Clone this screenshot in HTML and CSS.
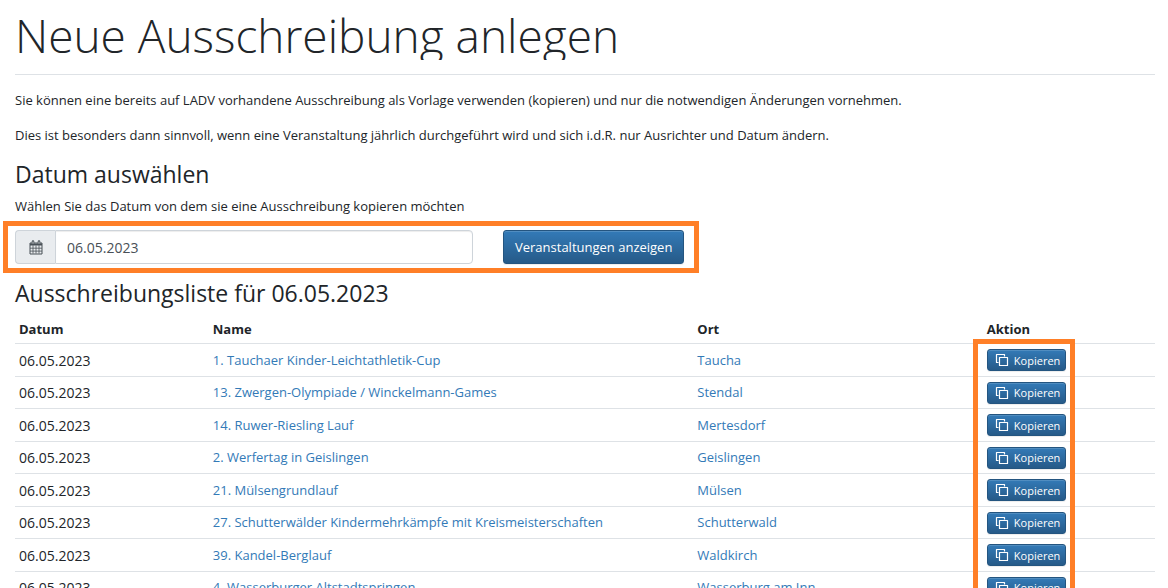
FILE: index.html
```html
<!DOCTYPE html>
<html lang="de">
<head>
<meta charset="utf-8">
<title>Neue Ausschreibung anlegen</title>
<link rel="stylesheet" href="styles.css">
</head>
<body>
<svg class="sprite" aria-hidden="true">
  <symbol id="copy" viewBox="0 0 14 14">
    <path d="M3.5 9.5H1.5V1.5H9.5V3.5M4.5 4.5H12.5V12.5H4.5Z" fill="none" stroke="currentColor" stroke-width="1.2" stroke-linejoin="round"/>
  </symbol>
</svg>
<main class="page">
  <header class="page-header">
    <h1 class="title">Neue Ausschreibung anlegen</h1>
  </header>
  <p class="text">Sie können eine bereits auf LADV vorhandene Ausschreibung als Vorlage verwenden (kopieren) und nur die notwendigen Änderungen vornehmen.</p>
  <p class="text">Dies ist besonders dann sinnvoll, wenn eine Veranstaltung jährlich durchgeführt wird und sich i.d.R. nur Ausrichter und Datum ändern.</p>
  <h2 class="heading">Datum auswählen</h2>
  <form class="date-form">
    <label class="label" for="datum">Wählen Sie das Datum von dem sie eine Ausschreibung kopieren möchten</label>
    <div class="controls">
      <div class="input-group">
        <span class="addon">
          <svg class="calendar" viewBox="0 0 14 14" aria-hidden="true">
            <path d="M1 2.5H13V13.5H1Z" fill="none" stroke="currentColor"/>
            <path d="M1 3H13V5H1Z" fill="currentColor"/>
            <path d="M4 5V13M7 5V13M10 5V13M1 7.7H13M1 10.6H13" stroke="currentColor" stroke-width=".8"/>
            <path d="M4 1V3.5M10 1V3.5" stroke="currentColor" stroke-width="2.6" stroke-linecap="round"/>
            <path d="M4 1V3.3M10 1V3.3" stroke="#e9ecef" stroke-width=".8"/>
          </svg>
        </span>
        <input class="input" id="datum" type="text" value="06.05.2023">
      </div>
      <button class="btn" type="submit">Veranstaltungen anzeigen</button>
      <span class="marker"></span>
    </div>
  </form>
  <h2 class="heading">Ausschreibungsliste für 06.05.2023</h2>
  <table class="table">
    <thead>
      <tr><th class="col-date">Datum</th><th class="col-name">Name</th><th class="col-place">Ort</th><th class="col-action">Aktion<span class="marker-column"></span></th></tr>
    </thead>
    <tbody>
      <tr><td class="date">06.05.2023</td><td><a href="#">1. Tauchaer Kinder-Leichtathletik-Cup</a></td><td><a href="#">Taucha</a></td><td><button class="btn btn-small" type="button"><svg class="copy"><use href="#copy"/></svg>Kopieren</button></td></tr>
      <tr><td class="date">06.05.2023</td><td><a href="#">13. Zwergen-Olympiade / Winckelmann-Games</a></td><td><a href="#">Stendal</a></td><td><button class="btn btn-small" type="button"><svg class="copy"><use href="#copy"/></svg>Kopieren</button></td></tr>
      <tr><td class="date">06.05.2023</td><td><a href="#">14. Ruwer-Riesling Lauf</a></td><td><a href="#">Mertesdorf</a></td><td><button class="btn btn-small" type="button"><svg class="copy"><use href="#copy"/></svg>Kopieren</button></td></tr>
      <tr><td class="date">06.05.2023</td><td><a href="#">2. Werfertag in Geislingen</a></td><td><a href="#">Geislingen</a></td><td><button class="btn btn-small" type="button"><svg class="copy"><use href="#copy"/></svg>Kopieren</button></td></tr>
      <tr><td class="date">06.05.2023</td><td><a href="#">21. Mülsengrundlauf</a></td><td><a href="#">Mülsen</a></td><td><button class="btn btn-small" type="button"><svg class="copy"><use href="#copy"/></svg>Kopieren</button></td></tr>
      <tr><td class="date">06.05.2023</td><td><a href="#">27. Schutterwälder Kindermehrkämpfe mit Kreismeisterschaften</a></td><td><a href="#">Schutterwald</a></td><td><button class="btn btn-small" type="button"><svg class="copy"><use href="#copy"/></svg>Kopieren</button></td></tr>
      <tr><td class="date">06.05.2023</td><td><a href="#">39. Kandel-Berglauf</a></td><td><a href="#">Waldkirch</a></td><td><button class="btn btn-small" type="button"><svg class="copy"><use href="#copy"/></svg>Kopieren</button></td></tr>
      <tr><td class="date">06.05.2023</td><td><a href="#">4. Wasserburger Altstadtspringen</a></td><td><a href="#">Wasserburg am Inn</a></td><td><button class="btn btn-small" type="button"><svg class="copy"><use href="#copy"/></svg>Kopieren</button></td></tr>
    </tbody>
  </table>
</main>
</body>
</html>
```

FILE: styles.css
```css
* { box-sizing: border-box; }
body {
  margin: 0;
  background: #fff;
  color: #212529;
  font: 13px/21px "Open Sans", "Noto Sans", sans-serif;
}
.sprite { display: none; }
.page {
  height: 100vh;
  overflow: hidden;
  padding: 10px 13px 0 15px;
}
.page-header {
  margin-bottom: 15px;
  padding-bottom: 14px;
  border-bottom: 1px solid #dee2e6;
}
.title {
  margin: 0;
  overflow: hidden;
  font-size: 46px;
  line-height: 50px;
  font-weight: 300;
}
.text { margin: 0 0 14px; }
.heading {
  margin: 0 0 8px;
  font-size: 23px;
  line-height: 28px;
  font-weight: 400;
}
.label { display: block; }
.controls {
  position: relative;
  display: flex;
  gap: 30px;
  margin: 13px 0 15px;
}
.input-group { display: flex; flex: 0 1 458px; }
.addon {
  display: flex;
  align-items: center;
  justify-content: center;
  width: 40px;
  border: 1px solid #ced4da;
  border-right: 0;
  border-radius: 4px 0 0 4px;
  background: #e9ecef;
  color: #495057;
}
.calendar { width: 14px; height: 15px; overflow: visible; }
.input {
  flex: 1;
  min-width: 0;
  height: 34px;
  padding: 0 11px;
  border: 1px solid #ced4da;
  border-radius: 0 4px 4px 0;
  box-shadow: inset 0 1px 1px rgba(0, 0, 0, .075);
  background: #fff;
  color: #495057;
  font: inherit;
  font-size: 14px;
}
.btn {
  height: 34px;
  padding: 0 11px;
  border: 1px solid #245580;
  border-radius: 3px;
  background: linear-gradient(#337ab7, #265a88);
  box-shadow: inset 0 1px 0 rgba(255, 255, 255, .15), 0 1px 1px rgba(0, 0, 0, .075);
  color: #fff;
  font: inherit;
  white-space: nowrap;
}
.btn-small {
  display: flex;
  align-items: center;
  gap: 5px;
  height: 22px;
  padding: 0 5px 0 7px;
  font-size: 11px;
}
.copy { width: 14px; height: 14px; }
.marker, .marker-column {
  position: absolute;
  border: 5px solid #ff7f27;
  pointer-events: none;
}
.marker { top: -9px; left: -12px; width: 696px; height: 52px; }
.marker-column { top: 24px; left: -10px; width: 102px; height: 100vh; }
.table {
  width: 100%;
  border-collapse: separate;
  border-spacing: 0;
  table-layout: fixed;
}
.col-date { width: 17%; }
.col-name { width: 42.5%; }
.col-place { width: 25.4%; }
.col-action { position: relative; }
.table th {
  height: 28px;
  padding: 0 4px;
  text-align: left;
  font-weight: 700;
}
.table td {
  height: 33px;
  padding: 0 4px;
  border-top: 1px solid #dee2e6;
}
.table .date { font-size: 14px; }
.table tr:nth-child(even) td { height: 32px; }
.table a { color: #337ab7; text-decoration: none; }
```
